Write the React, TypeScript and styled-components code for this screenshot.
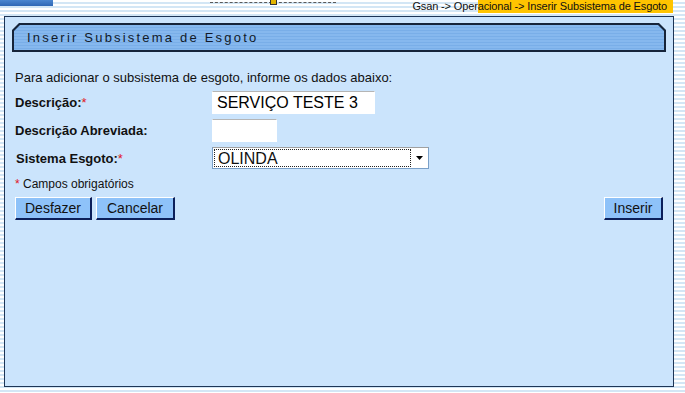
import styled, { createGlobalStyle } from 'styled-components'

const GlobalStyle = createGlobalStyle`
  html, body {
    margin: 0;
    padding: 0;
  }
  body {
    font-family: "Liberation Sans", Arial, sans-serif;
    color: #111;
  }
`

const Page = styled.div`
  width: 685px;
  height: 393px;
  overflow: hidden;
  background: repeating-linear-gradient(
    to bottom,
    #ffffff 0px,
    #ffffff 2px,
    #d3e6f5 2px,
    #d3e6f5 4px
  );
`

const Header = styled.div`
  height: 16px;
  display: flex;
  align-items: flex-start;
`

const TopBar = styled.div`
  width: 53px;
  height: 6px;
  background: linear-gradient(to bottom, #4b86d0, #2f67b5);
`

// bottom of the cut-off system title above the page
const TitleRemnant = styled.div`
  margin-left: 157px;
  width: 126px;
  height: 2px;
  border-bottom: 1px dashed #5a5a5a;
  display: flex;
  justify-content: center;
`

const TitleIcon = styled.div`
  width: 5px;
  height: 4px;
  background: #e2b400;
  border: 1px solid #333;
  border-top: none;
`

const Breadcrumb = styled.div`
  margin-left: auto;
  margin-right: 12px;
  height: 13px;
  font-size: 11px;
  line-height: 12px;
  letter-spacing: -0.14px;
  color: #111;
  padding-left: 2px;
  padding-right: 6px;
  background: linear-gradient(to right, transparent 0, transparent 68px, #ffc400 68px);
`

const Panel = styled.div`
  margin-left: 4px;
  width: 670px;
  height: 371px;
  box-sizing: border-box;
  border: 1px solid #1d3556;
  background: #cbe4fc;
  padding: 6px 7px 0 7px;
`

const TitleOuter = styled.div`
  height: 29px;
  background: #16243a;
  padding: 2px;
  box-sizing: border-box;
  clip-path: polygon(7px 0, calc(100% - 7px) 0, 100% 7px, 100% 100%, 0 100%, 0 7px);
`

const TitleInner = styled.div`
  height: 100%;
  display: flex;
  align-items: center;
  padding-left: 13px;
  background: repeating-linear-gradient(
    to bottom,
    #86b8ee 0px,
    #86b8ee 2px,
    #79aee8 2px,
    #79aee8 3px
  );
  clip-path: polygon(6px 0, calc(100% - 6px) 0, 100% 6px, 100% 100%, 0 100%, 0 6px);
  font-size: 13px;
  letter-spacing: 2.2px;
  color: #111a2a;
`

const Intro = styled.div`
  margin-top: 18px;
  margin-left: 3px;
  font-size: 13px;
  line-height: 16px;
`

const Form = styled.div`
  margin-top: 5px;
  margin-left: 3px;
  display: grid;
  grid-template-columns: 197px 1fr;
  row-gap: 5px;
  align-items: center;
`

const Label = styled.label<{ $indent?: number }>`
  font-size: 13px;
  font-weight: bold;
  padding-left: ${p => p.$indent ?? 0}px;
`

const Required = styled.span`
  color: #e0161e;
  font-weight: normal;
`

const TextInput = styled.input<{ $width: number }>`
  width: ${p => p.$width}px;
  height: 23px;
  box-sizing: border-box;
  border: 1px solid #ffffff;
  border-top-color: #b5b5b5;
  background: #fff;
  font-family: "Liberation Sans", Arial, sans-serif;
  font-size: 16px;
  padding: 0 4px;
  color: #000;
  outline: none;
`

const SelectBox = styled.div`
  width: 217px;
  height: 22px;
  box-sizing: border-box;
  background: #fff;
  border: 1px solid #7aa0c8;
  border-top-color: #a0a0a0;
  display: flex;
  align-items: stretch;
`

const SelectValue = styled.div`
  flex: 1;
  margin: 1px;
  border: 1px dotted #222;
  font-size: 16px;
  line-height: 17px;
  padding-left: 3px;
`

const SelectArrow = styled.div`
  width: 16px;
  display: flex;
  align-items: center;
  justify-content: center;
`

const Note = styled.div`
  margin-top: 8px;
  margin-left: 3px;
  font-size: 12px;
`

const ButtonRow = styled.div`
  margin-top: 6px;
  margin-left: 3px;
  margin-right: 3px;
  display: flex;
  gap: 4px;
`

const Button = styled.button<{ $width: number }>`
  width: ${p => p.$width}px;
  height: 23px;
  box-sizing: border-box;
  background: #8ec2f9;
  border: solid;
  border-color: #ffffff #0b1f5a #0b1f5a #ffffff;
  border-width: 1px 2px 2px 1px;
  font-family: "Liberation Sans", Arial, sans-serif;
  font-size: 14px;
  color: #111;
  padding: 0;
`

const Spacer = styled.div`
  flex: 1;
`

export default function App() {
  return (
    <Page>
      <GlobalStyle />
      <Header>
        <TopBar />
        <TitleRemnant>
          <TitleIcon />
        </TitleRemnant>
        <Breadcrumb>Gsan -&gt; Operacional -&gt; Inserir Subsistema de Esgoto</Breadcrumb>
      </Header>
      <Panel>
        <TitleOuter>
          <TitleInner>Inserir Subsistema de Esgoto</TitleInner>
        </TitleOuter>
        <Intro>Para adicionar o subsistema de esgoto, informe os dados abaixo:</Intro>
        <Form>
          <Label>
            Descrição:<Required>*</Required>
          </Label>
          <TextInput $width={163} defaultValue="SERVIÇO TESTE 3" />
          <Label>Descrição Abreviada:</Label>
          <TextInput $width={65} defaultValue="" />
          <Label $indent={1}>
            Sistema Esgoto:<Required>*</Required>
          </Label>
          <SelectBox>
            <SelectValue>OLINDA</SelectValue>
            <SelectArrow>
              <svg width="8" height="4" viewBox="0 0 8 4">
                <path d="M0 0 H7 L3.5 4 Z" fill="#000" />
              </svg>
            </SelectArrow>
          </SelectBox>
        </Form>
        <Note>
          <Required>*</Required> Campos obrigatórios
        </Note>
        <ButtonRow>
          <Button $width={77}>Desfazer</Button>
          <Button $width={79}>Cancelar</Button>
          <Spacer />
          <Button $width={59}>Inserir</Button>
        </ButtonRow>
      </Panel>
    </Page>
  )
}
